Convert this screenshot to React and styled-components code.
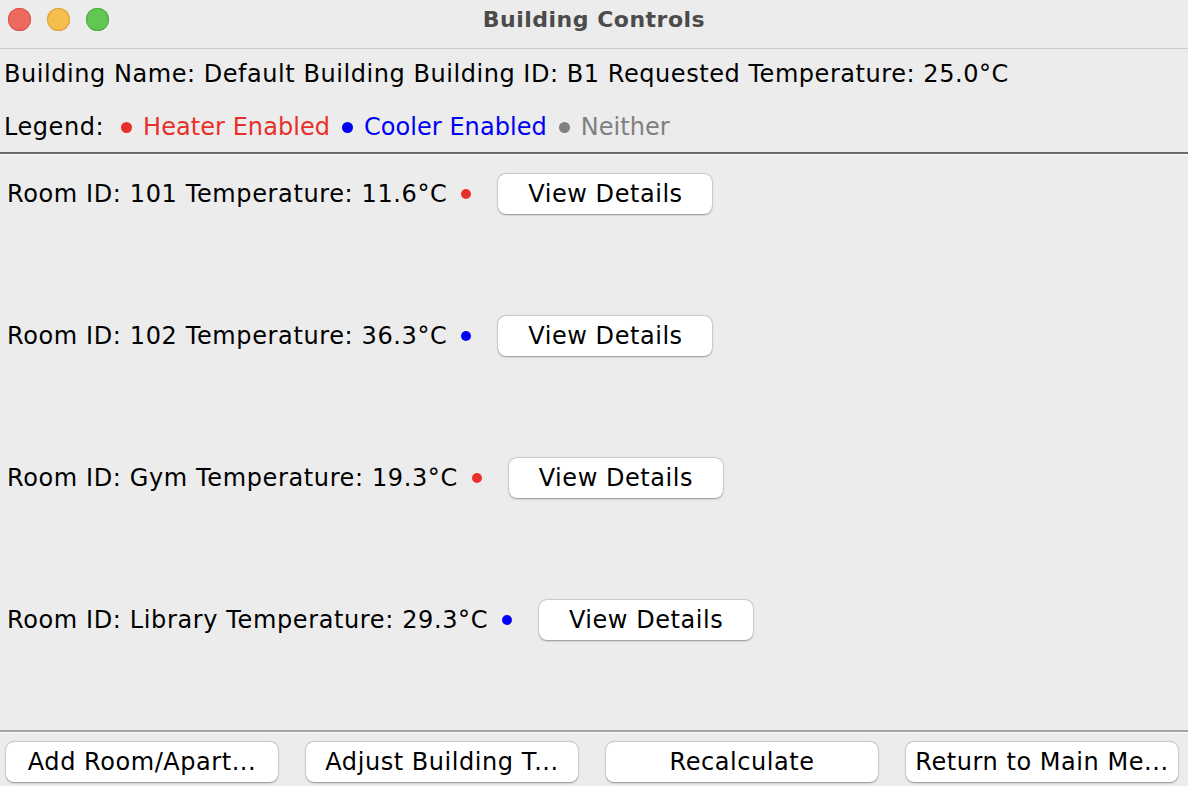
import React from "react";
import styled, { createGlobalStyle } from "styled-components";

const Global = createGlobalStyle`
  html, body { margin: 0; padding: 0; background: #ececec; }
  body { font-family: "DejaVu Sans", "Liberation Sans", sans-serif; }
`;

const Window = styled.div`
  width: 1188px;
  height: 786px;
  display: flex;
  flex-direction: column;
  background: #ececec;
  overflow: hidden;
  color: #000;
  font-size: 24px;
  letter-spacing: 0.55px;
`;

const TitleBar = styled.div`
  position: relative;
  height: 48px;
  flex: none;
  display: flex;
  align-items: center;
  justify-content: center;
  border-bottom: 1px solid #cdcdcd;
`;

const Lights = styled.div`
  position: absolute;
  left: 8px;
  top: 8px;
  display: flex;
  gap: 16px;
`;

const Light = styled.span`
  width: 23px;
  height: 23px;
  border-radius: 50%;
  background: ${(p) => p.$c};
  box-shadow: inset 0 0 0 1px ${(p) => p.$b};
`;

const Title = styled.div`
  font-size: 22px;
  font-weight: bold;
  color: #4b4b4b;
  margin-top: -9px;
  letter-spacing: 0.5px;
`;

const Header = styled.div`
  flex: none;
  display: flex;
  flex-direction: column;
  gap: 23px;
  padding: 10px 4px 10px 4px;
  height: 103px;
  box-sizing: border-box;
`;

const Line = styled.div`
  display: flex;
  align-items: center;
  height: 30px;
  white-space: nowrap;
`;

const LegendItem = styled.span`
  display: flex;
  align-items: center;
  gap: 11px;
  color: ${(p) => p.$c};
  letter-spacing: 0.05px;
  margin-left: ${(p) => p.$ml || 12}px;
`;

const Dot = styled.span`
  display: inline-block;
  width: ${(p) => p.$s || 10}px;
  height: ${(p) => p.$s || 10}px;
  border-radius: 50%;
  background: ${(p) => p.$c};
  flex: none;
`;

const Separator = styled.div`
  flex: none;
  height: ${(p) => p.$h}px;
  background: ${(p) => p.$c};
  border-bottom: 1px solid #fafafa;
`;

const Rooms = styled.div`
  flex: 1;
  display: flex;
  flex-direction: column;
`;

const Row = styled.div`
  height: 142px;
  box-sizing: border-box;
  padding: 19px 0 0 7px;
  display: flex;
  align-items: flex-start;
`;

const RoomInfo = styled.div`
  height: 40px;
  display: flex;
  align-items: center;
  gap: 14px;
  white-space: nowrap;
  letter-spacing: 0.62px;
`;

const Button = styled.button`
  height: 40px;
  border: none;
  border-radius: 8px;
  background: #fff;
  box-shadow: 0 0.5px 2px rgba(0, 0, 0, 0.35), 0 0 0 0.5px rgba(0, 0, 0, 0.12);
  font-family: inherit;
  font-size: 24px;
  letter-spacing: 0.55px;
  color: #000;
  padding: 0;
  white-space: nowrap;
  overflow: hidden;
  cursor: default;
`;

const DetailsButton = styled(Button)`
  width: 214px;
  margin-left: 27px;
`;

const ButtonBar = styled.div`
  flex: none;
  display: grid;
  grid-template-columns: repeat(4, 1fr);
  column-gap: 28px;
  padding: 9px 10px 4px 6px;
`;

const rooms = [
  { id: "101", t: "11.6", c: "#e8302a" },
  { id: "102", t: "36.3", c: "#0000f5" },
  { id: "Gym", t: "19.3", c: "#e8302a" },
  { id: "Library", t: "29.3", c: "#0000f5" },
];

export default function App() {
  return (
    <>
      <Global />
      <Window>
        <TitleBar>
          <Lights>
            <Light $c="#ee6a5f" $b="#d8574c" />
            <Light $c="#f5be4f" $b="#d9a33a" />
            <Light $c="#62c554" $b="#4fae40" />
          </Lights>
          <Title>Building Controls</Title>
        </TitleBar>
        <Header>
          <Line>Building Name: Default Building Building ID: B1 Requested Temperature: 25.0°C</Line>
          <Line>
            Legend:
            <LegendItem $c="#e8302a" $ml={17}>
              <Dot $c="#e8302a" $s={11} />
              Heater Enabled
            </LegendItem>
            <LegendItem $c="#0000f5">
              <Dot $c="#0000f5" $s={11} />
              Cooler Enabled
            </LegendItem>
            <LegendItem $c="#808080">
              <Dot $c="#808080" $s={11} />
              Neither
            </LegendItem>
          </Line>
        </Header>
        <Separator $h={2} $c="#6b6b6b" />
        <Rooms>
          {rooms.map((r) => (
            <Row key={r.id}>
              <RoomInfo>
                Room ID: {r.id} Temperature: {r.t}°C
                <Dot $c={r.c} />
              </RoomInfo>
              <DetailsButton>View Details</DetailsButton>
            </Row>
          ))}
        </Rooms>
        <Separator $h={2} $c="#a2a2a2" />
        <ButtonBar>
          <Button>Add Room/Apart...</Button>
          <Button>Adjust Building T...</Button>
          <Button>Recalculate</Button>
          <Button>Return to Main Me...</Button>
        </ButtonBar>
      </Window>
    </>
  );
}
